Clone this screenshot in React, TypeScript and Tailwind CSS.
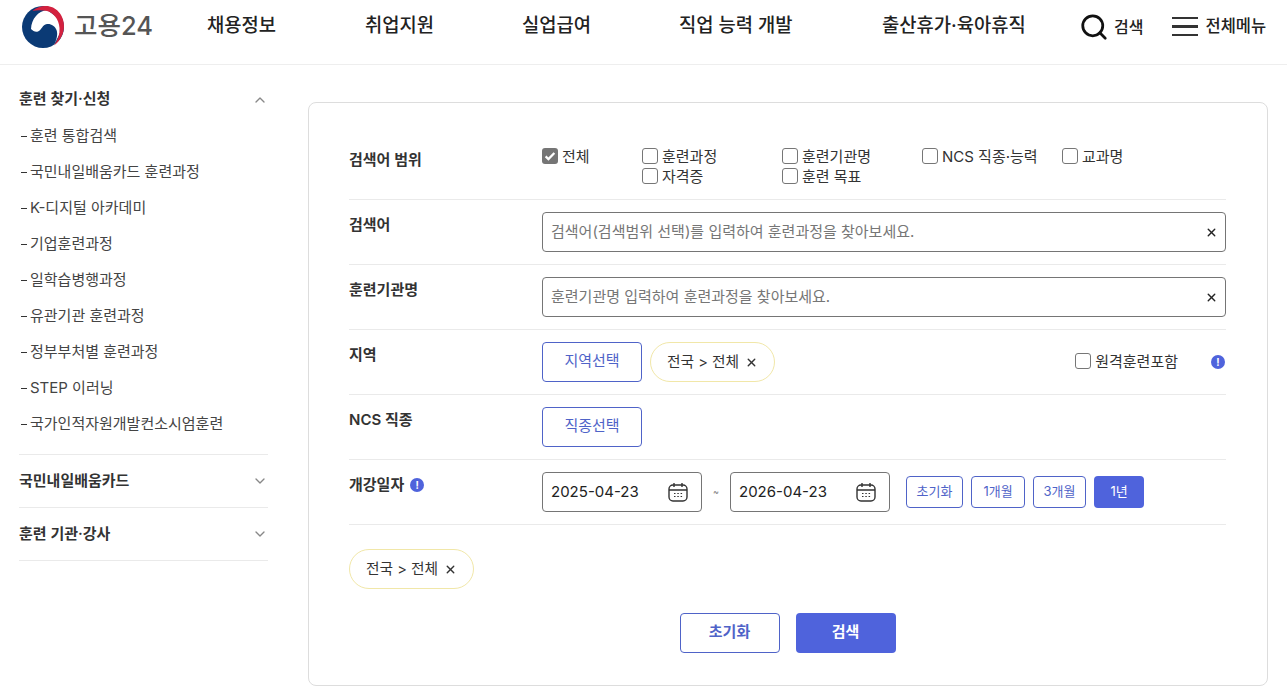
import { ChevronDown, ChevronUp, Search, X } from 'lucide-react';
import type { ReactNode } from 'react';

const trainingLinks = [
  '훈련 통합검색',
  '국민내일배움카드 훈련과정',
  'K-디지털 아카데미',
  '기업훈련과정',
  '일학습병행과정',
  '유관기관 훈련과정',
  '정부부처별 훈련과정',
  'STEP 이러닝',
  '국가인적자원개발컨소시엄훈련',
];

function Logo() {
  return (
    <svg viewBox="0 0 44 44" className="h-[44px] w-[44px] shrink-0">
      <circle cx="22" cy="22" r="21" fill="#0b3a75" />
      <path d="M10 24C10.500 14 17 6 26 5L40 15L39 28L33 40C36 34 37 29 35.500 25C34 21 30 18.500 26 19C21 19.500 21 25 17 26.500C14.500 27.500 12 26 10 24Z" fill="#fff" />
      <path d="M11.500 6C15 2.500 20 1 25 1C35 1 43 10 43 21C43 29 39 36 33 40.500C37 35 39 29 38.500 23C38 14 32 7.500 26 6C21 4.800 15.500 5 11.500 6Z" fill="#d3213f" />
    </svg>
  );
}

function InfoDot() {
  return (
    <span className="flex h-[14px] w-[14px] items-center justify-center rounded-full bg-[#4f63dc] text-[10px] font-bold leading-none text-white">
      !
    </span>
  );
}

function CalendarIcon() {
  return (
    <svg viewBox="0 0 22 22" fill="none" stroke="#333" strokeWidth="1.400" className="h-[22px] w-[22px]">
      <rect x="2" y="4" width="18" height="16" rx="4" />
      <path d="M2 9h18M7 2v4M15 2v4" />
      <path d="M7 12.500h1.500M10.300 12.500h1.500M13.600 12.500h1.500M7 15.500h1.500M10.300 15.500h1.500M13.600 15.500h1.500" strokeWidth="1.200" />
    </svg>
  );
}

function Check({ label, checked }: { label: string; checked?: boolean }) {
  return (
    <label className="flex h-[20px] items-center gap-[4px] text-[15px] leading-[20px] text-[#333]">
      {checked ? (
        <span className="mb-[2px] flex h-[16px] w-[16px] items-center justify-center rounded-[3px] bg-[#757575]">
          <svg viewBox="0 0 16 16" className="h-[14px] w-[14px]" fill="none" stroke="#fff" strokeWidth="2.600">
            <path d="M3 8.500l3.200 3L13 4.500" />
          </svg>
        </span>
      ) : (
        <span className="mb-[2px] h-[16px] w-[16px] rounded-[3px] border border-[#767676] bg-white" />
      )}
      {label}
    </label>
  );
}

function Tag() {
  return (
    <span className="flex h-[40px] items-center gap-[6px] rounded-full border border-[#f1e7a8] bg-white px-[16px] text-[14.700px] text-[#333]">
      전국 &gt; 전체
      <X size={13} strokeWidth={2.500} className="text-[#333]" />
    </span>
  );
}

function Row({ label, children }: { label: ReactNode; children: ReactNode }) {
  return (
    <div className="flex h-[65px] border-b border-[#eaeaea] py-[12px]">
      <div className="flex h-[26px] w-[193px] shrink-0 items-center gap-[6px] text-[15px] font-semibold text-[#333]">
        {label}
      </div>
      <div className="min-w-0 flex-1">{children}</div>
    </div>
  );
}

function TextField({ placeholder }: { placeholder: string }) {
  return (
    <div className="flex h-[40px] items-center justify-between rounded-[4px] border border-[#757575] pl-[8px] pr-[7px] text-[15px] text-[#767676]">
      <span>{placeholder}</span>
      <X size={13} strokeWidth={2.500} className="text-[#222]" />
    </div>
  );
}

function DateField({ value }: { value: string }) {
  return (
    <div className="flex h-[40px] w-[160px] items-center justify-between rounded-[4px] border border-[#757575] pl-[8px] pr-[12px] text-[15px] text-[#222]">
      {value}
      <CalendarIcon />
    </div>
  );
}

function SelectButton({ label }: { label: string }) {
  return (
    <button className="h-[40px] w-[100px] rounded-[4px] border border-[#4f63c8] bg-white pb-[2px] text-[15px] text-[#4f63c8]">
      {label}
    </button>
  );
}

function SmallButton({ label, active, width }: { label: string; active?: boolean; width: string }) {
  return (
    <button
      className={
        active
          ? `h-[32px] rounded-[4px] bg-[#4f63dc] text-[13px] text-white ${width}`
          : `h-[32px] rounded-[4px] border border-[#4f63c8] bg-white text-[13px] text-[#4f63c8] ${width}`
      }
    >
      {label}
    </button>
  );
}

function Sidebar() {
  return (
    <aside className="w-[249px] shrink-0 pt-[16px]">
      <div className="border-b border-[#eaeaea] pb-[12px]">
        <div className="flex h-[37px] items-center justify-between">
          <span className="text-[15px] font-semibold text-[#333]">훈련 찾기·신청</span>
          <ChevronUp size={16} className="text-[#888]" />
        </div>
        <ul className="text-[15px] text-[#444]">
          {trainingLinks.map((item) => (
            <li key={item} className="flex h-[36px] items-center">
              <span className="ml-[2px] mr-[3px] inline-block h-px w-[6px] bg-[#333]" />
              {item}
            </li>
          ))}
        </ul>
      </div>
      {['국민내일배움카드', '훈련 기관·강사'].map((item) => (
        <div key={item} className="flex h-[53px] items-center justify-between border-b border-[#eaeaea]">
          <span className="text-[15px] font-semibold text-[#333]">{item}</span>
          <ChevronDown size={16} className="text-[#888]" />
        </div>
      ))}
    </aside>
  );
}

function SearchForm() {
  return (
    <section className="ml-[40px] mt-[37px] w-[960px] rounded-[8px] border border-[#dddddd] pb-[32px] pl-[40px] pr-[41px] pt-[32px]">
      <Row label="검색어 범위">
        <div className="flex">
          <div className="w-[100px]">
            <Check label="전체" checked />
          </div>
          <div className="w-[140px]">
            <Check label="훈련과정" />
            <Check label="자격증" />
          </div>
          <div className="w-[140px]">
            <Check label="훈련기관명" />
            <Check label="훈련 목표" />
          </div>
          <div className="w-[140px]">
            <Check label="NCS 직종·능력" />
          </div>
          <Check label="교과명" />
        </div>
      </Row>
      <Row label="검색어">
        <TextField placeholder="검색어(검색범위 선택)를 입력하여 훈련과정을 찾아보세요." />
      </Row>
      <Row label="훈련기관명">
        <TextField placeholder="훈련기관명 입력하여 훈련과정을 찾아보세요." />
      </Row>
      <Row label="지역">
        <div className="flex items-center gap-[8px]">
          <SelectButton label="지역선택" />
          <Tag />
          <div className="ml-auto flex items-center pr-[1px]">
            <Check label="원격훈련포함" />
            <span className="ml-[33px]">
              <InfoDot />
            </span>
          </div>
        </div>
      </Row>
      <Row label="NCS 직종">
        <SelectButton label="직종선택" />
      </Row>
      <Row
        label={
          <>
            개강일자 <InfoDot />
          </>
        }
      >
        <div className="flex items-center">
          <DateField value="2025-04-23" />
          <span className="w-[28px] text-center text-[9px] text-[#777]">~</span>
          <DateField value="2026-04-23" />
          <div className="ml-[16px] flex gap-[8px]">
            <SmallButton label="초기화" width="w-[57px]" />
            <SmallButton label="1개월" width="w-[54px]" />
            <SmallButton label="3개월" width="w-[53px]" />
            <SmallButton label="1년" width="w-[50px]" active />
          </div>
        </div>
      </Row>
      <div className="mt-[24px] flex">
        <Tag />
      </div>
      <div className="mt-[24px] flex justify-center gap-[16px]">
        <button className="h-[40px] w-[100px] rounded-[4px] border border-[#4f63c8] bg-white pb-[2px] text-[15px] font-semibold text-[#4f63c8]">
          초기화
        </button>
        <button className="h-[40px] w-[100px] rounded-[4px] bg-[#4f63dc] pb-[2px] text-[15px] font-semibold text-white">
          검색
        </button>
      </div>
    </section>
  );
}

export default function App() {
  return (
    <div className="min-h-[699px] bg-white font-['Inter','Noto_Sans_CJK_KR',sans-serif]">
      <header className="flex h-[65px] items-center border-b border-[#eeeeee] pb-[11px] pl-[21px]">
        <div className="flex w-[186px] shrink-0 items-center gap-[9px]">
          <Logo />
          <span className="text-[25.500px] font-medium text-[#555]">고용24</span>
        </div>
        <nav className="flex text-[18.750px] font-medium text-[#222]">
          <span className="w-[158px]">채용정보</span>
          <span className="w-[157px]">취업지원</span>
          <span className="w-[157px]">실업급여</span>
          <span className="w-[203px]">직업 능력 개발</span>
          <span className="w-[199px]">출산휴가·육아휴직</span>
        </nav>
        <div className="flex items-center gap-[5px] text-[16px] font-medium text-[#222]">
          <Search size={30} strokeWidth={2.200} className="-ml-[2px] text-[#111]" />
          검색
        </div>
        <div className="ml-[29px] flex items-center gap-[7px] text-[16.500px] font-medium text-[#222]">
          <span className="flex w-[26px] flex-col gap-[6px]">
            <span className="h-[2.500px] bg-[#333]" />
            <span className="h-[2.500px] bg-[#333]" />
            <span className="h-[2.500px] bg-[#333]" />
          </span>
          전체메뉴
        </div>
      </header>
      <main className="flex pl-[19px]">
        <Sidebar />
        <SearchForm />
      </main>
    </div>
  );
}
